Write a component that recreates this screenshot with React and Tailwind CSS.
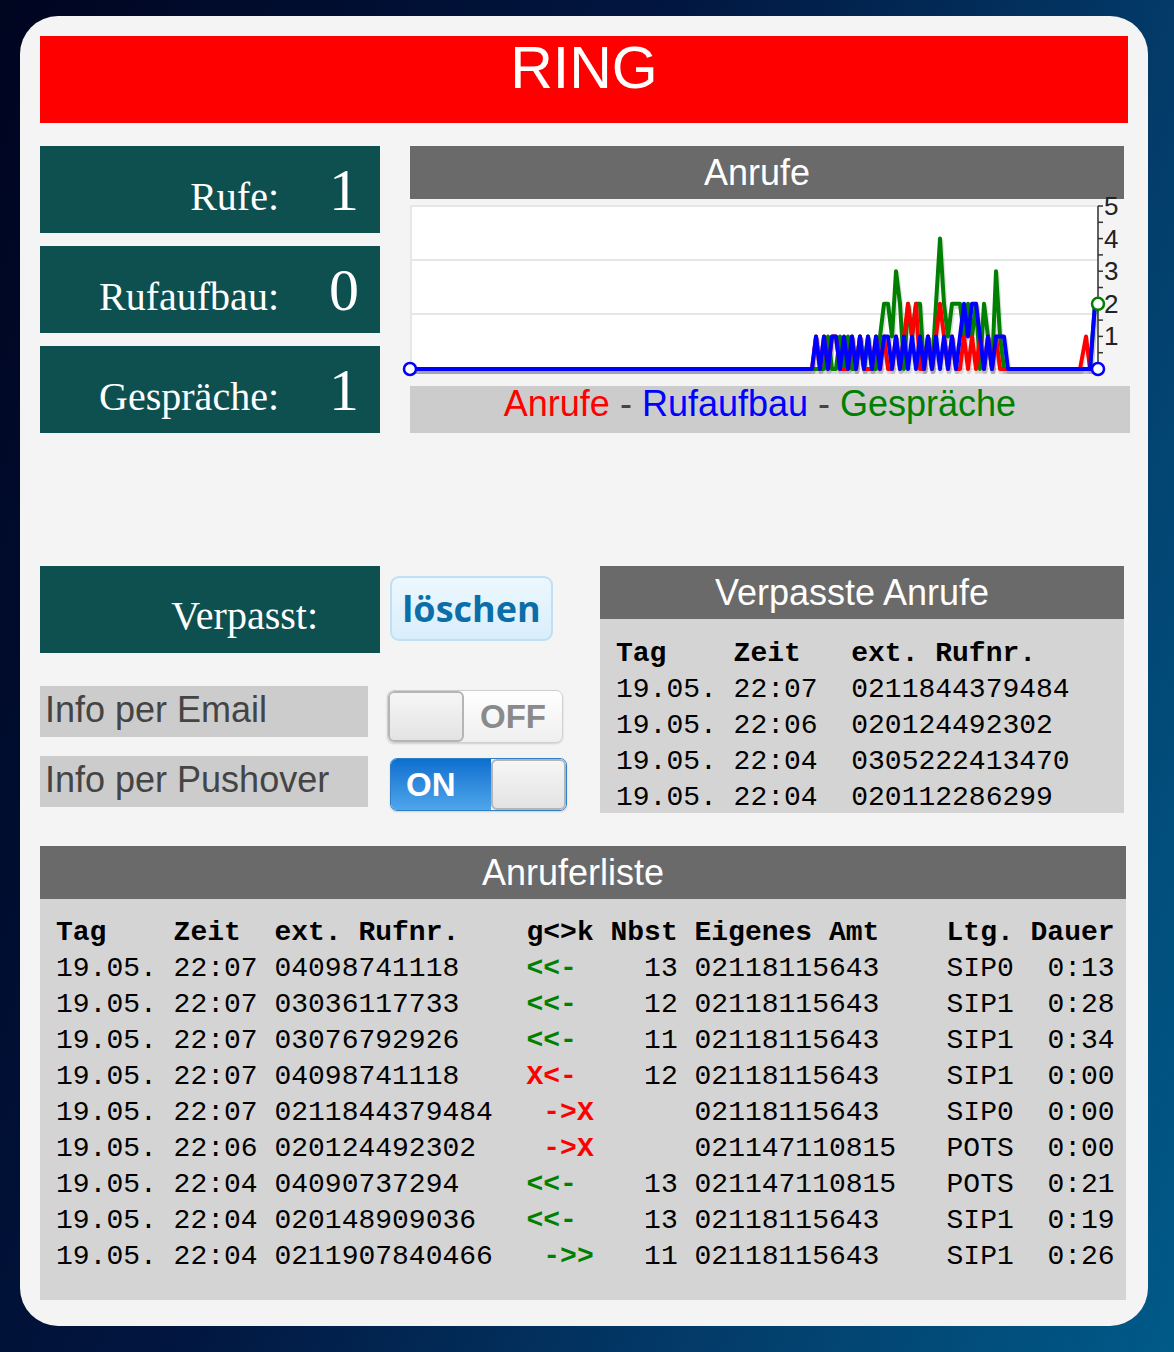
import React from 'react';

// chart helpers: page coordinates are used directly in the viewBox
const y = (v) => 369 - 32.6 * v;
const toPoints = (pts) => pts.map(([x, v]) => `${x},${y(v).toFixed(1)}`).join(' ');
const step = (vals) => vals.map((v, i) => [812 + i * 4, v]);

const blueVals = [0,1,0,1,0,1,1,0,1,0,1,0,1,0,1,0,1,0,1,1,0,1,0,1,0,1,0,1,0,1,0,1,0,1,0,1,0,1,2,1,2,2,1,0,1,0,1,1,1,0];
const greenVals = [0,0,0,0,1,0,0,1,0,1,0,0,1,0,1,0,0,1,2,2,1,3,2,0,2,1,2,2,0,1,0,2,4,2,1,2,2,2,1,2,1,2,0,2,1,0,3,1,0,0];
const redVals = [0,1,0,1,0,1,1,0,0,0,1,0,1,0,0,0,1,0,1,0,0,1,0,1,2,1,2,0,0,1,0,1,2,1,0,1,0,0,1,0,1,0,1,0,1,0,1,0,0,0];

const blue = [[410, 0], ...step(blueVals), [1012, 0], [1090, 0], [1095, 2]];
const blueTail = [[1095, 0], [1098, 0]];
const green = [[410, 0], ...step(greenVals), [1012, 0], [1090, 0], [1095, 2], [1098, 2]];
const red = [[410, 0], ...step(redVals), [1012, 0], [1080, 0], [1086, 1], [1090, 0], [1098, 0]];

const Chart = () => (
  <svg width="720" height="187" viewBox="410 199 720 187" className="block overflow-visible">
    <rect x="411" y="206" width="687" height="163" fill="#ffffff" stroke="#e6e6e6" strokeWidth="2" />
    <line x1="411" y1="260" x2="1098" y2="260" stroke="#e6e6e6" strokeWidth="2" />
    <line x1="411" y1="314" x2="1098" y2="314" stroke="#e6e6e6" strokeWidth="2" />
    <line x1="1098" y1="206" x2="1098" y2="369" stroke="#333" strokeWidth="1.5" />
    {Array.from({ length: 11 }, (_, k) => (
      <line key={k} x1="1098" x2="1103" y1={y(k / 2)} y2={y(k / 2)} stroke="#333" strokeWidth="1.5" />
    ))}
    {[1, 2, 3, 4, 5].map((v) => (
      <text key={v} x="1104" y={y(v) + 9} fontSize="26" fill="#222" fontFamily="Liberation Sans, Arial, sans-serif">{v}</text>
    ))}
    {/* shadows */}
    {[green, red, blue].map((s, i) => (
      <polyline key={i} points={toPoints(s.map(([x, v]) => [x + 1, v - 0.08]))} fill="none" stroke="rgba(0,0,0,0.12)" strokeWidth="5" strokeLinejoin="round" />
    ))}
    <polyline points={toPoints(green)} fill="none" stroke="#008000" strokeWidth="4" strokeLinejoin="round" />
    <polyline points={toPoints(red)} fill="none" stroke="#ff0000" strokeWidth="4" strokeLinejoin="round" />
    <polyline points={toPoints(blue)} fill="none" stroke="#0000ff" strokeWidth="4" strokeLinejoin="round" />
    <polyline points={toPoints(blueTail)} fill="none" stroke="#0000ff" strokeWidth="4" />
    <circle cx="410" cy="369" r="6" fill="#fff" stroke="#0000ff" strokeWidth="2.5" />
    <circle cx="1098" cy="369" r="6" fill="#fff" stroke="#0000ff" strokeWidth="2.5" />
    <circle cx="1098" cy={y(2)} r="6" fill="#fff" stroke="#008000" strokeWidth="2.5" />
  </svg>
);

const StatBox = ({ label, value }) => (
  <div className="flex h-[87px] items-baseline bg-[#0e5050] pt-[14px] text-white font-['Liberation_Serif','Times_New_Roman',serif]">
    <span className="flex-1 pr-[33px] text-right text-[40px] leading-none">{label}</span>
    <span className="w-[64px] mr-[4px] text-center text-[60px] leading-none">{value}</span>
  </div>
);

const PanelHeader = ({ children, className = '' }) => (
  <div className={`h-[53px] bg-[#6a6a6a] pr-[20px] text-center text-[36px] leading-[53px] text-white ${className}`}>{children}</div>
);

const missed = [
  ['19.05.', '22:07', '0211844379484'],
  ['19.05.', '22:06', '020124492302'],
  ['19.05.', '22:04', '0305222413470'],
  ['19.05.', '22:04', '020112286299'],
];

const calls = [
  ['19.05.', '22:07', '04098741118', '<<- ', 'g', '13', '02118115643', 'SIP0', '0:13'],
  ['19.05.', '22:07', '03036117733', '<<- ', 'g', '12', '02118115643', 'SIP1', '0:28'],
  ['19.05.', '22:07', '03076792926', '<<- ', 'g', '11', '02118115643', 'SIP1', '0:34'],
  ['19.05.', '22:07', '04098741118', 'X<- ', 'r', '12', '02118115643', 'SIP1', '0:00'],
  ['19.05.', '22:07', '0211844379484', ' ->X', 'r', '', '02118115643', 'SIP0', '0:00'],
  ['19.05.', '22:06', '020124492302', ' ->X', 'r', '', '021147110815', 'POTS', '0:00'],
  ['19.05.', '22:04', '04090737294', '<<- ', 'g', '13', '021147110815', 'POTS', '0:21'],
  ['19.05.', '22:04', '020148909036', '<<- ', 'g', '13', '02118115643', 'SIP1', '0:19'],
  ['19.05.', '22:04', '0211907840466', ' ->>', 'g', '11', '02118115643', 'SIP1', '0:26'],
];

const mono = "font-['Liberation_Mono','Courier_New',monospace] text-[28px] leading-[36px] text-black whitespace-pre";

export default function App() {
  return (
    <div className="min-h-[1352px] w-full bg-[linear-gradient(110deg,#000520_0%,#011640_40%,#033c6a_72%,#005a88_100%)] pt-[16px] pl-[20px] pb-[26px] font-['Liberation_Sans',Arial,sans-serif]">
      <div className="h-[1310px] w-[1128px] rounded-[38px] bg-[#f4f4f4] px-[20px] pt-[20px]">
        <div className="h-[87px] bg-[#ff0000] pt-[3px] text-center text-[59px] leading-none text-white">RING</div>

        <div className="mt-[23px] flex">
          <div className="flex w-[340px] shrink-0 flex-col gap-[13px]">
            <StatBox label="Rufe:" value="1" />
            <StatBox label="Rufaufbau:" value="0" />
            <StatBox label="Gespräche:" value="1" />
          </div>
          <div className="ml-[30px] flex shrink-0 flex-col">
            <PanelHeader className="w-[714px]">Anrufe</PanelHeader>
            <Chart />
            <div className="h-[47px] w-[720px] bg-[#cccccc] pr-[20px] text-center text-[36px] leading-[36px]">
              <span className="text-[#ff0000]">Anrufe</span>
              <span className="text-[#444]"> - </span>
              <span className="text-[#0000ff]">Rufaufbau</span>
              <span className="text-[#444]"> - </span>
              <span className="text-[#008000]">Gespräche</span>
            </div>
          </div>
        </div>

        <div className="mt-[133px] flex">
          <div className="w-[560px] shrink-0">
            <div className="flex items-start">
              <div className="h-[87px] w-[340px] bg-[#0e5050] pt-[30px] pr-[62px] text-right font-['Liberation_Serif','Times_New_Roman',serif] text-[40px] leading-none text-white">Verpasst:</div>
              <button className="ml-[10px] mt-[10px] flex h-[65px] w-[163px] items-center justify-center rounded-[9px] border-2 border-[#bfe0f4] bg-linear-to-b from-[#ecf7fe] to-[#d9eefb] font-['Open_Sans',sans-serif] text-[36px] font-bold leading-none text-[#0b6ea8]">löschen</button>
            </div>

            <div className="mt-[33px] flex h-[51px] items-start">
              <div className="h-[51px] w-[328px] bg-[#cccccc] pl-[5px] text-[36px] leading-[48px] text-[#444]">Info per Email</div>
              <div className="ml-[19px] mt-[4px] flex h-[53px] w-[176px] shrink-0 overflow-hidden rounded-[7px] border border-[#cfcfcf] bg-linear-to-b from-[#ffffff] to-[#efefef] shadow-[0_1px_2px_rgba(0,0,0,0.15)]">
                <div className="h-full w-[76px] rounded-[6px] border-2 border-[#b5b5b5] bg-linear-to-b from-[#f6f6f6] to-[#e3e3e3]" />
                <div className="flex flex-1 items-center justify-center text-[33px] font-bold text-[#8a8a8a]">OFF</div>
              </div>
            </div>
            <div className="mt-[19px] flex h-[51px] items-start">
              <div className="h-[51px] w-[328px] bg-[#cccccc] pl-[5px] text-[36px] leading-[48px] text-[#444]">Info per Pushover</div>
              <div className="ml-[22px] mt-[2px] flex h-[53px] w-[177px] shrink-0 overflow-hidden rounded-[7px] border border-[#2f7fc8] shadow-[0_1px_2px_rgba(0,0,0,0.15)]">
                <div className="flex w-[100px] items-center pl-[15px] bg-linear-to-b from-[#0a6fcf] to-[#4ea6ea] text-[33px] font-bold text-white">ON</div>
                <div className="h-full flex-1 rounded-[6px] border-2 border-[#b5b5b5] bg-linear-to-b from-[#f6f6f6] to-[#e3e3e3]" />
              </div>
            </div>
          </div>

          <div className="w-[524px] shrink-0 self-start">
            <PanelHeader>Verpasste Anrufe</PanelHeader>
            <div className={`h-[194px] bg-[#d4d4d4] pl-[16px] pt-[17px] ${mono}`}>
              <div className="font-bold">{'Tag    Zeit   ext. Rufnr.'}</div>
              {missed.map((r, i) => (
                <div key={i}>{`${r[0]} ${r[1]}  ${r[2]}`}</div>
              ))}
            </div>
          </div>
        </div>

        <div className="mt-[33px] w-[1086px]">
          <PanelHeader>Anruferliste</PanelHeader>
          <div className={`h-[401px] bg-[#d4d4d4] pl-[16px] pt-[16px] ${mono}`}>
            <div className="font-bold">{'Tag    Zeit  ext. Rufnr.    g<>k Nbst Eigenes Amt    Ltg. Dauer'}</div>
            {calls.map((r, i) => (
              <div key={i}>
                {`${r[0]} ${r[1]} ${r[2]}`.padEnd(28, ' ')}
                <span className={r[4] === 'g' ? 'font-bold text-[#008000]' : 'font-bold text-[#ff0000]'}>{r[3]}</span>
                {` ${r[5].padStart(4, ' ')} ${r[6].padEnd(15, ' ')}${r[7]}${r[8].padStart(6, ' ')}`}
              </div>
            ))}
          </div>
        </div>
      </div>
    </div>
  );
}
